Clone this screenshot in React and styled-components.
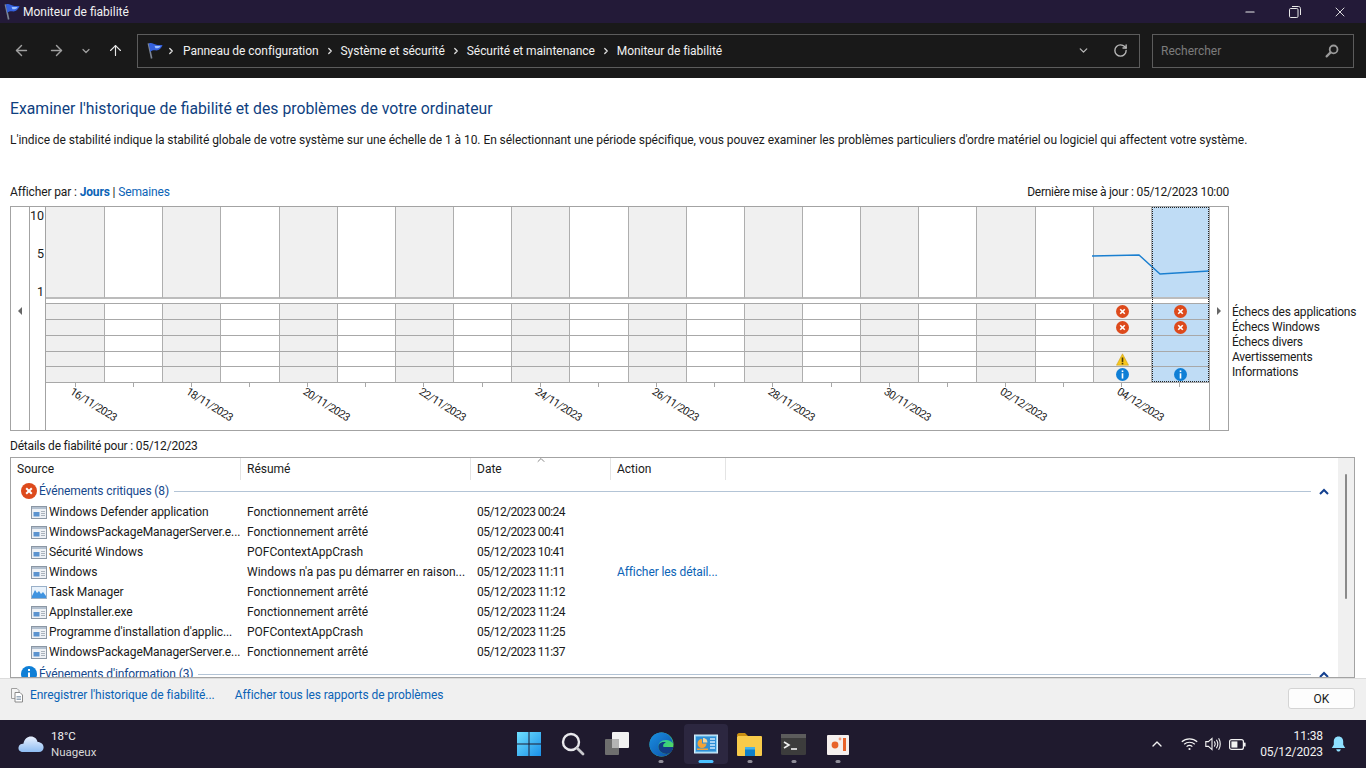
import React from 'react';
import styled, {createGlobalStyle} from 'styled-components';
import {ArrowLeft, ArrowRight, ArrowUp, ChevronDown, ChevronRight, ChevronUp, Minus, RotateCw, X} from 'lucide-react';

const GlobalStyle = createGlobalStyle`
  html, body {
    margin: 0;
    padding: 0;
    height: 100%;
    overflow: hidden;
    background: #fff;
  }
  body {
    font-family: Roboto, "Noto Sans", sans-serif;
    font-size: 12px;
    color: #1a1a1a;
  }
  * {
    box-sizing: border-box;
  }
  svg {
    flex: none;
  }
`;

const Page = styled.div`
  width: 1366px;
  height: 768px;
  display: flex;
  flex-direction: column;
  overflow: hidden;
`;

const TitleBar = styled.header`
  height: 23px;
  flex: none;
  background: #231a38;
  color: #f2f2f2;
  display: flex;
  align-items: center;
  padding: 0 4px 0 3px;
`;

const TitleText = styled.span`
  flex: 1;
  margin-left: 3px;
`;

const WindowControl = styled.span`
  width: 45px;
  height: 23px;
  display: flex;
  align-items: center;
  justify-content: center;
  color: #e8e8e8;
`;

const Toolbar = styled.div`
  height: 55px;
  flex: none;
  background: #191919;
  display: flex;
  align-items: center;
  padding-left: 4px;
`;

const NavButton = styled.span`
  width: ${(props) => props.$w}px;
  display: flex;
  justify-content: center;
  color: ${(props) => props.$dim ? '#a0a0a0' : '#e6e6e6'};
`;

const AddressBox = styled.div`
  width: 1003px;
  height: 34px;
  margin-left: 5px;
  border: 1px solid #5c5c5c;
  display: flex;
  align-items: center;
  padding-left: 8px;
  color: #f0f0f0;
  letter-spacing: -0.05px;
`;

const Crumbs = styled.div`
  flex: 1;
  display: flex;
  align-items: center;
`;

const CrumbSep = styled.span`
  width: ${(props) => props.$w}px;
  margin-right: ${(props) => props.$mr || 0}px;
  display: flex;
  justify-content: center;
  color: #e0e0e0;
`;

const AddressAction = styled.span`
  width: ${(props) => props.$w}px;
  display: flex;
  justify-content: center;
  color: #b8b8b8;
`;

const SearchBox = styled.div`
  width: 202px;
  height: 34px;
  margin-left: 12px;
  border: 1px solid #5c5c5c;
  display: flex;
  align-items: center;
  justify-content: space-between;
  padding: 0 14px 0 8px;
  color: #7c7c7c;
`;

const Main = styled.main`
  flex: 1;
  min-height: 0;
  background: #fff;
  padding: 0 11px 0 10px;
  overflow: hidden;
`;

const Heading = styled.h1`
  margin: 21px 0 0;
  font-size: 15.75px;
  line-height: 20px;
  font-weight: 400;
  color: #0f3f7f;
`;

const Description = styled.p`
  margin: 13px 0 0;
  line-height: 16px;
  white-space: nowrap;
  letter-spacing: -0.06px;
`;

const ViewBar = styled.div`
  margin: 36px 126px 0 0;
  line-height: 16px;
  display: flex;
  justify-content: space-between;
`;

const ViewChoice = styled.span`
  letter-spacing: -0.13px;
`;

const UpdateStamp = styled.span`
  letter-spacing: -0.26px;
`;

const Link = styled.a`
  color: #0b63b6;
  font-weight: ${(props) => props.$bold ? 700 : 400};
  white-space: nowrap;
`;

const ChartRow = styled.div`
  margin-top: 6px;
  display: flex;
`;

const Chart = styled.div`
  width: 1219px;
  height: 225px;
  flex: none;
  border: 1px solid #a3a3a3;
  display: grid;
  grid-template-columns: 19px 16px 1163px 19px;
`;

const ArrowColumn = styled.div`
  display: flex;
  align-items: center;
  justify-content: center;
  padding-bottom: 16px;
  border-${(props) => props.$side}: 1px solid #a3a3a3;
  color: #555;
`;

const Triangle = styled.span`
  width: 0;
  height: 0;
  border-top: 4px solid transparent;
  border-bottom: 4px solid transparent;
  border-${(props) => props.$dir === 'left' ? 'right' : 'left'}: 4px solid #666;
`;

const YAxis = styled.div`
  border-right: 1px solid #a3a3a3;
  display: flex;
  flex-direction: column;
  align-items: flex-end;
  gap: 22px;
  padding: 1px 1px 0 0;
  font-size: 12.5px;
  line-height: 16px;
`;

const Plot = styled.div`
  position: relative;
  display: flex;
  flex-direction: column;
`;

const DayGrid = styled.div`
  display: grid;
  grid-template-columns: repeat(20, 1fr);
  height: ${(props) => props.$h}px;
  flex: none;
`;

const GraphDay = styled.div`
  background: ${(props) => props.$selected ? '#bfdcf5' : props.$even ? '#f0f0f0' : '#fff'};
  border-left: ${(props) => props.$start ? 0 : '1px solid #aeaeae'};
  border-bottom: 2px solid #bcbcbc;
`;

const StatusDay = styled.div`
  background: ${(props) => props.$selected ? '#bfdcf5' : props.$even ? '#f0f0f0' : '#fff'};
  border-left: ${(props) => props.$start ? 0 : '1px solid #aeaeae'};
  border-bottom: 1px solid #a8a8a8;
  border-top: ${(props) => props.$first ? '1px solid #a8a8a8' : 0};
  display: flex;
  align-items: center;
  justify-content: center;
`;

const StatusGap = styled.div`
  height: 4px;
  flex: none;
`;

const AxisDay = styled.div`
  position: relative;
  display: flex;
  justify-content: center;
`;

const Tick = styled.span`
  width: 1px;
  height: 4px;
  background: #a8a8a8;
`;

const DateLabel = styled.span`
  position: absolute;
  left: 50%;
  top: 22px;
  font-size: 11px;
  line-height: 12px;
  letter-spacing: -0.6px;
  white-space: nowrap;
  transform: translate(-50%, -50%) translateX(18px) rotate(32deg);
`;

const GraphLine = styled.svg`
  position: absolute;
  left: 0;
  top: 0;
  width: 1163px;
  height: 92px;
`;

const SelectedFrame = styled.div`
  position: absolute;
  right: 0;
  top: 0;
  width: 57px;
  height: 175px;
  border: 1px dotted #222;
`;

const Legend = styled.ul`
  list-style: none;
  margin: 0;
  padding: 99px 0 0 3px;
  line-height: 15px;
  white-space: nowrap;
  letter-spacing: -0.2px;
`;

const DetailsLabel = styled.div`
  margin-top: 7px;
  line-height: 16px;
  letter-spacing: -0.2px;
`;

const DetailsBox = styled.section`
  margin-top: 3px;
  width: 1345px;
  height: 221px;
  border: 1px solid #a3a3a3;
  display: flex;
`;

const DetailsBody = styled.div`
  flex: 1;
  min-width: 0;
  overflow: hidden;
`;

const Columns = styled.div`
  display: grid;
  grid-template-columns: 230px 230px 140px 115px;
`;

const HeaderCell = styled.div`
  position: relative;
  height: 22px;
  line-height: 22px;
  padding-left: 6px;
  border-right: 1px solid #e4e4e4;
`;

const SortCaret = styled.span`
  position: absolute;
  left: 50%;
  top: -4px;
  margin-left: -6px;
  display: flex;
  color: #888;
`;

const Group = styled.div`
  height: 16px;
  margin-top: ${(props) => props.$mt}px;
  margin-bottom: 3px;
  padding: 0 9px 0 10px;
  display: flex;
  align-items: center;
  color: #16488c;
`;

const GroupName = styled.span`
  margin-left: 2px;
  white-space: nowrap;
  letter-spacing: -0.1px;
`;

const GroupRule = styled.span`
  flex: 1;
  height: 1px;
  margin: 0 8px 0 5px;
  background: #b3c4d6;
`;

const GroupCaret = styled.svg`
  width: 10px;
  height: 7px;
  flex: none;
`;

const Row = styled(Columns)`
  height: 20px;
  line-height: 20px;
`;

const Cell = styled.div`
  padding-left: 6px;
  white-space: nowrap;
  color: ${(props) => props.$link ? '#0b63b6' : '#1a1a1a'};
  letter-spacing: ${(props) => props.$link ? '-0.1px' : 0};
`;

const DateCell = styled(Cell)`
  letter-spacing: -0.55px;
`;

const SourceCell = styled.div`
  padding-left: 20px;
  display: flex;
  align-items: center;
  gap: 2px;
  white-space: nowrap;
  letter-spacing: -0.1px;
`;

const Scrollbar = styled.div`
  width: 16px;
  flex: none;
  background: #f0f0f0;
  padding: 16px 0 0 7px;
`;

const ScrollThumb = styled.div`
  width: 2px;
  height: 125px;
  background: #8a8a8a;
  border-radius: 1px;
`;

const Footer = styled.footer`
  height: 42px;
  flex: none;
  background: #f0f0f0;
  border-top: 1px solid #dcdcdc;
  padding: 8px 11px 0 11px;
  display: flex;
  align-items: flex-start;
  line-height: 16px;
`;

const FooterLinks = styled.div`
  flex: 1;
  display: flex;
  align-items: center;
  gap: 20px;
  letter-spacing: -0.06px;
`;

const SaveLink = styled.span`
  display: flex;
  align-items: center;
  gap: 7px;
`;

const OkButton = styled.button`
  width: 67px;
  height: 21px;
  margin-top: 1px;
  background: #fdfdfd;
  border: 1px solid #d4d4d4;
  border-radius: 3px;
  font: inherit;
  color: #1a1a1a;
  padding: 0;
`;

const Taskbar = styled.footer`
  height: 48px;
  flex: none;
  background: #1f1a2e;
  color: #f2f2f2;
  display: grid;
  grid-template-columns: 1fr auto 1fr;
  align-items: center;
`;

const Weather = styled.div`
  display: flex;
  align-items: center;
  gap: 7px;
  padding-left: 18px;
  font-size: 11.5px;
  line-height: 16px;
`;

const WeatherText = styled.div`
  color: #d8d8d8;
`;

const Temperature = styled.div`
  color: #f5f5f5;
`;

const TaskIcons = styled.div`
  display: flex;
  margin-left: 1px;
`;

const TaskIcon = styled.div`
  position: relative;
  width: 44.2px;
  height: 40px;
  display: flex;
  align-items: center;
  justify-content: center;
  border-radius: 4px;
  background: ${(props) => props.$active ? '#2c2740' : 'transparent'};
`;

const RunMark = styled.span`
  position: absolute;
  bottom: 1px;
  left: 50%;
  transform: translateX(-50%);
  width: ${(props) => props.$active ? 15 : 5}px;
  height: 3px;
  border-radius: 2px;
  background: ${(props) => props.$active ? '#4cc2ff' : '#8f8d98'};
`;

const Tray = styled.div`
  display: flex;
  align-items: center;
  justify-content: flex-end;
  padding-right: 20px;
`;

const TrayIcon = styled.span`
  width: ${(props) => props.$w}px;
  display: flex;
  justify-content: center;
`;

const Clock = styled.div`
  margin: 0 8px 0 11px;
  text-align: right;
  font-size: 12px;
  line-height: 16px;
  letter-spacing: -0.1px;
`;

const FlagIcon = ({size = 18}) => (
  <svg width={size} height={size} viewBox="0 0 18 18">
    <path d="M2.5 1.5 L6 17.5" stroke="#7c8594" strokeWidth="1.7" />
    <path d="M3 1.5 C6 0 8 2 11 3 C13 3.6 15 3 17.5 3.5 C16.5 6 14 9 11 9 C9 9 7.5 8 4.6 10.5 Z" fill="#3460dc" />
    <path d="M9 4 C11 4.6 13 4.2 15.5 4.4 C14.5 6 12.5 7 10 6.6 Z" fill="#9ec0ff" />
  </svg>
);

const ErrorIcon = ({size = 13}) => (
  <svg width={size} height={size} viewBox="0 0 16 16">
    <circle cx="8" cy="8" r="8" fill="#dd4a1c" />
    <path d="M5.2 5.2 L10.8 10.8 M10.8 5.2 L5.2 10.8" stroke="#fff" strokeWidth="2" />
  </svg>
);

const InfoIcon = ({size = 13}) => (
  <svg width={size} height={size} viewBox="0 0 16 16">
    <circle cx="8" cy="8" r="8" fill="#0f7fd6" />
    <rect x="7" y="6.5" width="2" height="6.5" fill="#fff" />
    <rect x="7" y="3" width="2" height="2" fill="#fff" />
  </svg>
);

const WarnIcon = ({size = 13}) => (
  <svg width={size} height={size} viewBox="0 0 16 16">
    <path d="M8 1 L15.5 15 L0.5 15 Z" fill="#f6c61e" stroke="#c79a10" strokeWidth="0.6" />
    <rect x="7" y="5.5" width="2" height="5.5" fill="#4a3a08" />
    <rect x="7" y="12" width="2" height="2" fill="#4a3a08" />
  </svg>
);

const AppIcon = () => (
  <svg width="16" height="16" viewBox="0 0 16 16">
    <rect x="0.5" y="2.5" width="15" height="12" fill="#eef1f5" stroke="#8c97a4" />
    <rect x="1" y="3" width="14" height="2" fill="#b3c0cf" />
    <rect x="2.5" y="8" width="6" height="4.5" fill="#5b93cf" />
    <path d="M10 7.5 H14 M10 9.5 H14 M10 11.5 H14" stroke="#aab3bd" />
  </svg>
);

const ChartAppIcon = () => (
  <svg width="16" height="16" viewBox="0 0 16 16">
    <rect x="0.5" y="2.5" width="15" height="12" fill="#e9f2fb" stroke="#9ab0c8" />
    <path d="M1 12 L4 6 L6 9 L8 7 L10 10 L12 8 L15 12 V14 H1 Z" fill="#3f93e0" />
  </svg>
);

const SaveIcon = () => (
  <svg width="12" height="16" viewBox="0 0 12 16">
    <path d="M0.5 1.5 H6 L8 3.5 V11.5 H0.5 Z" fill="#f4f4f4" stroke="#a0a0a0" />
    <path d="M4 5.5 H9 L11.5 8 V15 H4 Z" fill="#fff" stroke="#8a8a8a" />
    <path d="M5.5 9.5 H10 M5.5 11 H10 M5.5 12.5 H10" stroke="#9ab" />
  </svg>
);

const SearchGlyph = ({size = 14, color = '#9a9a9a'}) => (
  <svg width={size} height={size} viewBox="0 0 14 14">
    <circle cx="8.6" cy="5.4" r="3.9" fill="none" stroke={color} strokeWidth="1.8" />
    <path d="M5.6 8.4 L1.6 12.4" stroke={color} strokeWidth="2.2" strokeLinecap="round" />
  </svg>
);

const RestoreIcon = () => (
  <svg width="12" height="12" viewBox="0 0 12 12" fill="none" stroke="#e8e8e8">
    <rect x="0.5" y="2.5" width="8.5" height="9" rx="1.2" />
    <path d="M3 0.5 H9.5 C10.6 0.5 11.5 1.4 11.5 2.5 V9" />
  </svg>
);

const Cloud = () => (
  <svg width="26" height="18" viewBox="0 0 26 18">
    <defs>
      <linearGradient id="cloudFill" x1="0" y1="0" x2="0" y2="1">
        <stop offset="0" stopColor="#e8f1ff" />
        <stop offset="1" stopColor="#8ebcf2" />
      </linearGradient>
    </defs>
    <path d="M5 17 C1.5 17 0 14.5 0.6 12 C1.2 9.8 3.2 8.6 5.4 8.8 C6.4 4 9.4 1.6 13 1.6 C16.4 1.6 18.8 4 19.6 7 C23 7 25.6 9.4 25.6 12.4 C25.6 15 23.6 17 21 17 Z" fill="url(#cloudFill)" />
  </svg>
);

const StartIcon = () => (
  <svg width="24" height="24" viewBox="0 0 24 24">
    <defs>
      <linearGradient id="startFill" x1="0" y1="0" x2="1" y2="1">
        <stop offset="0" stopColor="#6fe0ff" />
        <stop offset="1" stopColor="#1a8fe8" />
      </linearGradient>
    </defs>
    <path d="M0 0 H11.5 V11.5 H0 Z M12.5 0 H24 V11.5 H12.5 Z M0 12.5 H11.5 V24 H0 Z M12.5 12.5 H24 V24 H12.5 Z" fill="url(#startFill)" />
  </svg>
);

const TaskSearchIcon = () => (
  <svg width="24" height="24" viewBox="0 0 24 24" fill="none">
    <circle cx="10" cy="10" r="8" stroke="#e8e8ec" strokeWidth="2.4" />
    <path d="M16 16 L22 22" stroke="#c8c8cc" strokeWidth="2.8" strokeLinecap="round" />
  </svg>
);

const TaskViewIcon = () => (
  <svg width="24" height="24" viewBox="0 0 24 24">
    <rect x="0" y="7" width="14" height="16" rx="1" fill="#6e6e6e" />
    <rect x="7" y="0" width="17" height="16" rx="1" fill="#f2f2f2" />
    <rect x="7" y="7" width="7" height="9" fill="#b4b4b4" />
  </svg>
);

const EdgeIcon = () => (
  <svg width="25" height="25" viewBox="0 0 25 25">
    <defs>
      <linearGradient id="edgeRing" x1="0" y1="0" x2="1" y2="1">
        <stop offset="0" stopColor="#2fc6d8" />
        <stop offset="0.6" stopColor="#3ad17a" />
        <stop offset="1" stopColor="#7be04a" />
      </linearGradient>
      <linearGradient id="edgeBlue" x1="0" y1="0" x2="1" y2="1">
        <stop offset="0" stopColor="#1a8fe0" />
        <stop offset="1" stopColor="#0c4fa8" />
      </linearGradient>
    </defs>
    <circle cx="12.5" cy="12.5" r="12" fill="url(#edgeRing)" />
    <path d="M12.5 0.5 C5.5 0.5 0.5 6 0.5 12.5 C0.5 19.5 6 24.5 12.5 24.5 C16 24.5 18.5 23.5 20.5 21.5 C15 23 10 20 9.5 15.5 C9 11 12 8 17 8 C20 8 22.5 9.5 24 11.5 C23 5 18.5 0.5 12.5 0.5 Z" fill="url(#edgeBlue)" />
    <path d="M9.5 15.5 C10 20 15 23 20.5 21.5 C22.5 20 24 18 24.3 15 L14.5 15 C13.5 13 15 11 17 10.5 C13 9 9 11.5 9.5 15.5 Z" fill="#123d84" />
  </svg>
);

const PanelIcon = () => (
  <svg width="24" height="24" viewBox="0 0 24 24">
    <rect x="0.5" y="3" width="23" height="18" fill="#8fd0f2" stroke="#d7eefb" />
    <rect x="2" y="4.5" width="20" height="15" fill="#2f8fd6" />
    <path d="M8 7 A4.5 4.5 0 1 0 12.5 11.5 H8 Z" fill="#f2a33a" />
    <path d="M9 6 A4.5 4.5 0 0 1 13.5 10.5 H9 Z" fill="#f7d9a0" />
    <rect x="3" y="16.5" width="11" height="1.5" fill="#f2a33a" />
    <path d="M16 7 H21 M16 10 H21 M16 13 H21 M16 16 H21" stroke="#cfeaff" strokeWidth="1.4" />
  </svg>
);

const FolderIcon = () => (
  <svg width="25" height="23" viewBox="0 0 25 23">
    <path d="M0 2 C0 1 1 0 2 0 H8 L11 3 H0 Z" fill="#c98f12" />
    <rect x="0" y="3" width="25" height="20" rx="1" fill="#f8cb4a" />
    <rect x="8" y="14" width="10" height="9" fill="#1080c8" />
    <rect x="8" y="14" width="10" height="2.5" fill="#45b3ea" />
  </svg>
);

const TerminalIcon = () => (
  <svg width="25" height="21" viewBox="0 0 25 21">
    <rect x="0" y="0" width="25" height="21" rx="1.5" fill="#3c3c3c" />
    <rect x="0" y="0" width="25" height="4" fill="#5c5c5c" />
    <path d="M3 8 L8 11 L3 14" fill="none" stroke="#f0f0f0" strokeWidth="1.6" />
    <path d="M10 15 H16" stroke="#f0f0f0" strokeWidth="1.6" />
  </svg>
);

const SlidesIcon = () => (
  <svg width="22" height="21" viewBox="0 0 22 21">
    <rect x="0" y="1" width="22" height="20" rx="1" fill="#f5f0ee" />
    <rect x="16" y="4" width="3" height="13" fill="#e8632a" />
    <circle cx="8" cy="11" r="3.4" fill="#e8632a" />
    <circle cx="13" cy="5" r="1.4" fill="#f0a080" />
  </svg>
);

const WifiIcon = () => (
  <svg width="17" height="14" viewBox="0 0 17 14" fill="none" stroke="#f2f2f2" strokeWidth="1.2">
    <path d="M0.8 4.8 C5 0.8 12 0.8 16.2 4.8" />
    <path d="M3.2 7.2 C6 4.6 11 4.6 13.8 7.2" />
    <path d="M5.6 9.6 C7.2 8.2 9.8 8.2 11.4 9.6" />
    <circle cx="8.5" cy="12" r="1.1" fill="#f2f2f2" stroke="none" />
  </svg>
);

const VolumeIcon = () => (
  <svg width="17" height="14" viewBox="0 0 17 14" fill="none" stroke="#f2f2f2" strokeWidth="1.1">
    <path d="M0.8 4.6 H3.4 L7 1.4 V12.6 L3.4 9.4 H0.8 Z" />
    <path d="M9.4 4.4 C10.4 6 10.4 8 9.4 9.6" />
    <path d="M11.4 2.8 C13 5.2 13 8.8 11.4 11.2" />
    <path d="M13.6 1.2 C15.8 4.4 15.8 9.6 13.6 12.8" />
  </svg>
);

const BatteryIcon = () => (
  <svg width="17" height="11" viewBox="0 0 17 11">
    <rect x="0.6" y="0.6" width="13.8" height="9.8" rx="2" fill="none" stroke="#f2f2f2" strokeWidth="1.2" />
    <rect x="2.4" y="2.4" width="6" height="6.2" fill="#f2f2f2" />
    <rect x="15" y="3.5" width="1.6" height="4" rx="0.6" fill="#f2f2f2" />
  </svg>
);

const BellIcon = () => (
  <svg width="15" height="16" viewBox="0 0 15 16" fill="#8fe0ff">
    <path d="M7.5 0.5 C4.4 0.5 2.8 2.8 2.8 5.5 V8.8 L0.8 12 H14.2 L12.2 8.8 V5.5 C12.2 2.8 10.6 0.5 7.5 0.5 Z" />
    <path d="M5.2 13.2 H9.8 C9.4 14.8 8.5 15.5 7.5 15.5 C6.5 15.5 5.6 14.8 5.2 13.2 Z" />
  </svg>
);

const crumbs = ['Panneau de configuration', 'Système et sécurité', 'Sécurité et maintenance', 'Moniteur de fiabilité'];
const legend = ['Échecs des applications', 'Échecs Windows', 'Échecs divers', 'Avertissements', 'Informations'];
const dates = ['16/11/2023', '', '18/11/2023', '', '20/11/2023', '', '22/11/2023', '', '24/11/2023', '', '26/11/2023', '', '28/11/2023', '', '30/11/2023', '', '02/12/2023', '', '04/12/2023', ''];
const days = dates.map((d, i) => i);

// which icons sit in the last two days, row by row
const statusRows = [
  {h: 17, icons: {18: <ErrorIcon />, 19: <ErrorIcon />}},
  {h: 16, icons: {18: <ErrorIcon />, 19: <ErrorIcon />}},
  {h: 16, icons: {}},
  {h: 15, icons: {18: <WarnIcon />}},
  {h: 16, icons: {18: <InfoIcon />, 19: <InfoIcon />}},
];

const events = [
  ['Windows Defender application', 'Fonctionnement arrêté', '05/12/2023 00:24'],
  ['WindowsPackageManagerServer.e...', 'Fonctionnement arrêté', '05/12/2023 00:41'],
  ['Sécurité Windows', 'POFContextAppCrash', '05/12/2023 10:41'],
  ['Windows', "Windows n'a pas pu démarrer en raison...", '05/12/2023 11:11', 'Afficher les détail...'],
  ['Task Manager', 'Fonctionnement arrêté', '05/12/2023 11:12'],
  ['AppInstaller.exe', 'Fonctionnement arrêté', '05/12/2023 11:24'],
  ["Programme d'installation d'applic...", 'POFContextAppCrash', '05/12/2023 11:25'],
  ['WindowsPackageManagerServer.e...', 'Fonctionnement arrêté', '05/12/2023 11:37'],
];

const taskIcons = [
  {icon: <StartIcon />},
  {icon: <TaskSearchIcon />},
  {icon: <TaskViewIcon />},
  {icon: <EdgeIcon />, running: true},
  {icon: <PanelIcon />, running: true, active: true},
  {icon: <FolderIcon />, running: true},
  {icon: <TerminalIcon />, running: true},
  {icon: <SlidesIcon />, running: true},
];

const GroupCaretIcon = () => (
  <GroupCaret viewBox="0 0 10 7">
    <path d="M1 6 L5 2 L9 6" fill="none" stroke="#123f8f" strokeWidth="2" />
  </GroupCaret>
);

const App = () => (
  <Page>
    <GlobalStyle />
    <TitleBar>
      <FlagIcon size={17} />
      <TitleText>Moniteur de fiabilité</TitleText>
      <WindowControl><Minus size={14} /></WindowControl>
      <WindowControl><RestoreIcon /></WindowControl>
      <WindowControl><X size={16} strokeWidth={1.4} /></WindowControl>
    </TitleBar>

    <Toolbar>
      <NavButton $w={34} $dim><ArrowLeft size={17} /></NavButton>
      <NavButton $w={36} $dim><ArrowRight size={17} /></NavButton>
      <NavButton $w={24} $dim><ChevronDown size={12} strokeWidth={2.4} /></NavButton>
      <NavButton $w={34}><ArrowUp size={17} strokeWidth={1.6} /></NavButton>
      <AddressBox>
        <FlagIcon size={17} />
        <Crumbs>
          <CrumbSep $w={16} $mr={4}><ChevronRight size={10} strokeWidth={3} /></CrumbSep>
          {crumbs.map((crumb, i) => (
            <React.Fragment key={crumb}>
              {i > 0 && <CrumbSep $w={22}><ChevronRight size={10} strokeWidth={3} /></CrumbSep>}
              <span>{crumb}</span>
            </React.Fragment>
          ))}
        </Crumbs>
        <AddressAction $w={36}><ChevronDown size={13} strokeWidth={2.4} /></AddressAction>
        <AddressAction $w={38}><RotateCw size={15} strokeWidth={2.2} /></AddressAction>
      </AddressBox>
      <SearchBox>
        Rechercher
        <SearchGlyph />
      </SearchBox>
    </Toolbar>

    <Main>
      <Heading>Examiner l'historique de fiabilité et des problèmes de votre ordinateur</Heading>
      <Description>
        L'indice de stabilité indique la stabilité globale de votre système sur une échelle de 1 à 10. En sélectionnant une période spécifique, vous pouvez examiner les problèmes particuliers d'ordre matériel ou logiciel qui affectent votre système.
      </Description>
      <ViewBar>
        <ViewChoice>Afficher par : <Link $bold>Jours</Link> | <Link>Semaines</Link></ViewChoice>
        <UpdateStamp>Dernière mise à jour : 05/12/2023 10:00</UpdateStamp>
      </ViewBar>

      <ChartRow>
        <Chart>
          <ArrowColumn $side="right"><Triangle $dir="left" /></ArrowColumn>
          <YAxis>
            <span>10</span>
            <span>5</span>
            <span>1</span>
          </YAxis>
          <Plot>
            <DayGrid $h={92}>
              {days.map((d) => <GraphDay key={d} $start={d === 0} $even={d % 2 === 0} $selected={d === 19} />)}
            </DayGrid>
            <StatusGap />
            {statusRows.map((row, r) => (
              <DayGrid key={r} $h={row.h}>
                {days.map((d) => (
                  <StatusDay key={d} $start={d === 0} $first={r === 0} $even={d % 2 === 0} $selected={d === 19}>{row.icons[d]}</StatusDay>
                ))}
              </DayGrid>
            ))}
            <DayGrid $h={47}>
              {days.map((d) => (
                <AxisDay key={d}>
                  <Tick />
                  {dates[d] && <DateLabel>{dates[d]}</DateLabel>}
                </AxisDay>
              ))}
            </DayGrid>
            <GraphLine viewBox="0 0 1163 92">
              <polyline points="1046,49 1093,48 1114,67 1163,64" fill="none" stroke="#1a7fd0" strokeWidth="1.4" />
            </GraphLine>
            <SelectedFrame />
          </Plot>
          <ArrowColumn $side="left"><Triangle $dir="right" /></ArrowColumn>
        </Chart>
        <Legend>
          {legend.map((item) => <li key={item}>{item}</li>)}
        </Legend>
      </ChartRow>

      <DetailsLabel>Détails de fiabilité pour : 05/12/2023</DetailsLabel>
      <DetailsBox>
        <DetailsBody>
          <Columns>
            <HeaderCell>Source</HeaderCell>
            <HeaderCell>Résumé</HeaderCell>
            <HeaderCell>
              Date
              <SortCaret><ChevronUp size={12} /></SortCaret>
            </HeaderCell>
            <HeaderCell>Action</HeaderCell>
          </Columns>
          <Group $mt={3}>
            <ErrorIcon size={16} />
            <GroupName>Événements critiques (8)</GroupName>
            <GroupRule />
            <GroupCaretIcon />
          </Group>
          {events.map(([source, summary, date, action], i) => (
            <Row key={i}>
              <SourceCell>
                {source === 'Task Manager' ? <ChartAppIcon /> : <AppIcon />}
                {source}
              </SourceCell>
              <Cell>{summary}</Cell>
              <DateCell>{date}</DateCell>
              {action && <Cell $link>{action}</Cell>}
            </Row>
          ))}
          <Group $mt={4}>
            <InfoIcon size={16} />
            <GroupName>Événements d'information (3)</GroupName>
            <GroupRule />
            <GroupCaretIcon />
          </Group>
        </DetailsBody>
        <Scrollbar><ScrollThumb /></Scrollbar>
      </DetailsBox>
    </Main>

    <Footer>
      <FooterLinks>
        <SaveLink>
          <SaveIcon />
          <Link>Enregistrer l'historique de fiabilité...</Link>
        </SaveLink>
        <Link>Afficher tous les rapports de problèmes</Link>
      </FooterLinks>
      <OkButton>OK</OkButton>
    </Footer>

    <Taskbar>
      <Weather>
        <Cloud />
        <div>
          <Temperature>18°C</Temperature>
          <WeatherText>Nuageux</WeatherText>
        </div>
      </Weather>
      <TaskIcons>
        {taskIcons.map((item, i) => (
          <TaskIcon key={i} $active={item.active}>
            {item.icon}
            {item.running && <RunMark $active={item.active} />}
          </TaskIcon>
        ))}
      </TaskIcons>
      <Tray>
        <TrayIcon $w={40}><ChevronUp size={16} strokeWidth={2} /></TrayIcon>
        <TrayIcon $w={24}><WifiIcon /></TrayIcon>
        <TrayIcon $w={24}><VolumeIcon /></TrayIcon>
        <TrayIcon $w={24}><BatteryIcon /></TrayIcon>
        <Clock>
          <div>11:38</div>
          <div>05/12/2023</div>
        </Clock>
        <BellIcon />
      </Tray>
    </Taskbar>
  </Page>
);

export default App;
